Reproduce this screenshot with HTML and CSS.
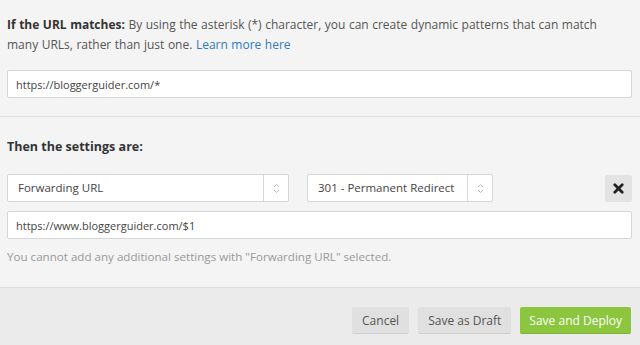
FILE: index.html
```html
<!DOCTYPE html>
<html lang="en">
<head>
<meta charset="UTF-8">
<meta name="viewport" content="width=device-width, initial-scale=1.0">
<title>Page Rule</title>
<link rel="stylesheet" href="styles.css">
</head>
<body>
<div class="rule-section">
  <p class="intro"><strong>If the URL matches:</strong> By using the asterisk (*) character, you can create dynamic patterns that can match many URLs, rather than just one. <a href="#">Learn more here</a></p>
  <input class="field" type="text" value="https://bloggerguider.com/*">
</div>

<div class="settings-section">
  <h3 class="settings-title">Then the settings are:</h3>
  <div class="setting-row">
    <div class="select select-wide">
      <span class="select-value">Forwarding URL</span>
      <span class="select-arrow">
        <svg width="7" height="11" viewBox="0 0 7 11"><path d="M1 4 L3.5 1.5 L6 4" fill="none" stroke="#bbb" stroke-width="1"/><path d="M1 7 L3.5 9.5 L6 7" fill="none" stroke="#bbb" stroke-width="1"/></svg>
      </span>
    </div>
    <div class="select select-narrow">
      <span class="select-value">301 - Permanent Redirect</span>
      <span class="select-arrow">
        <svg width="7" height="11" viewBox="0 0 7 11"><path d="M1 4 L3.5 1.5 L6 4" fill="none" stroke="#bbb" stroke-width="1"/><path d="M1 7 L3.5 9.5 L6 7" fill="none" stroke="#bbb" stroke-width="1"/></svg>
      </span>
    </div>
    <button class="remove-btn" type="button">
      <svg width="11" height="11" viewBox="0 0 11 11"><path d="M1.8 1.8 L9.2 9.2 M9.2 1.8 L1.8 9.2" stroke="#222" stroke-width="2.8" stroke-linecap="round"/></svg>
    </button>
  </div>
  <input class="field" type="text" value="https://www.bloggerguider.com/$1">
  <p class="hint">You cannot add any additional settings with "Forwarding URL" selected.</p>
</div>

<div class="footer">
  <button class="btn" type="button">Cancel</button>
  <button class="btn" type="button">Save as Draft</button>
  <button class="btn btn-primary" type="button">Save and Deploy</button>
</div>
</body>
</html>
```

FILE: styles.css
```css
body {
  margin: 0;
  padding: 0;
  font-family: "Open Sans", Arial, sans-serif;
  font-size: 12px;
  line-height: 20px;
  color: #555;
  background-color: #f4f4f4;
}

.rule-section {
  padding: 15px 8px 18px 7px;
  border-bottom: 1px solid #dcdcdc;
}

.intro {
  margin: 0 0 15px;
  padding-right: 20px;
  word-spacing: 0.4px;
}

.intro strong {
  color: #333;
  font-weight: 700;
}

.intro a {
  color: #2f7bbf;
  text-decoration: none;
}

.field {
  display: block;
  box-sizing: border-box;
  width: 100%;
  height: 28px;
  padding: 0 8px;
  border: 1px solid #d6d6d6;
  border-radius: 2px;
  background: #fff;
  font-family: inherit;
  font-size: 11px;
  color: #444;
  outline: none;
}

.settings-section {
  padding: 20px 8px 20px 7px;
  border-bottom: 1px solid #dcdcdc;
}

.settings-title {
  margin: 0 0 17px;
  font-size: 12.5px;
  line-height: 20px;
  font-weight: 700;
  color: #333;
}

.setting-row {
  display: flex;
  align-items: center;
  margin-bottom: 9px;
}

.select {
  display: flex;
  box-sizing: border-box;
  height: 28px;
  border: 1px solid #d6d6d6;
  border-radius: 2px;
  background: #fff;
}

.select-wide {
  width: 282px;
  margin-right: 18px;
}

.select-narrow {
  width: 186px;
}

.select-value {
  flex: 1;
  padding-left: 10px;
  line-height: 26px;
  font-size: 11.5px;
  color: #444;
  white-space: nowrap;
  overflow: hidden;
}

.select-arrow {
  display: flex;
  align-items: center;
  justify-content: center;
  width: 24px;
  border-left: 1px solid #d6d6d6;
}

.remove-btn {
  display: flex;
  align-items: center;
  justify-content: center;
  margin-left: auto;
  width: 27px;
  height: 27px;
  padding: 0;
  border: none;
  border-radius: 2px;
  background: #e3e3e3;
}

.hint {
  margin: 8px 0 0;
  font-size: 11.6px;
  color: #999;
}

.footer {
  display: flex;
  justify-content: flex-end;
  gap: 9px;
  padding: 19px 9px 20px 8px;
  background: #ebebeb;
}

.btn {
  height: 27px;
  padding: 0 10px;
  border: none;
  border-bottom: 1px solid #cfcfcf;
  border-radius: 2px;
  background: #e0e0e0;
  color: #555;
  font-family: inherit;
  font-size: 12px;
  cursor: pointer;
}

.btn-primary {
  padding: 0 9px;
  background: #8cc63e;
  border-bottom-color: #7db334;
  color: #fff;
}
```
